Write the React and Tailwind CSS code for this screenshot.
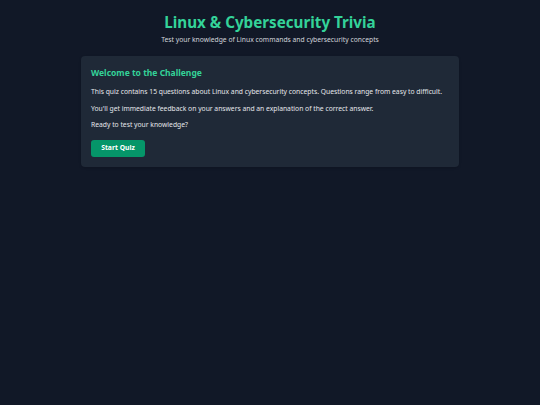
import React from "react";

export default function App() {
  return (
    <main
      className="min-h-screen bg-[#111827] text-[#e5e7eb]"
      style={{ fontFamily: '"Noto Sans", "Open Sans", sans-serif' }}
    >
      <div className="mx-auto w-[378px] pt-[12px]">
        <header className="flex flex-col items-center text-center">
          <h1 className="text-[15.2px] leading-[20px] font-bold text-[#34d399]">
            Linux &amp; Cybersecurity Trivia
          </h1>
          <p className="mt-[3px] text-[6.75px] leading-[9px] text-[#d1d5db]">
            Test your knowledge of Linux commands and cybersecurity concepts
          </p>
        </header>

        <section className="mt-[12px] rounded-[4px] bg-[#1f2937] px-[10px] pt-[11px] pb-[10px] shadow">
          <h2 className="text-[8.5px] leading-[12px] font-bold text-[#34d399]">
            Welcome to the Challenge
          </h2>
          <div className="mt-[8px] flex flex-col gap-[6.5px] text-[6.75px] leading-[10px] text-[#e5e7eb]">
            <p>
              This quiz contains 15 questions about Linux and cybersecurity
              concepts. Questions range from easy to difficult.
            </p>
            <p>
              You'll get immediate feedback on your answers and an explanation
              of the correct answer.
            </p>
            <p>Ready to test your knowledge?</p>
          </div>
          <button className="mt-[10px] h-[17px] w-[54px] rounded-[3px] bg-[#059669] text-[6.8px] font-bold text-white">
            Start Quiz
          </button>
        </section>
      </div>
    </main>
  );
}
